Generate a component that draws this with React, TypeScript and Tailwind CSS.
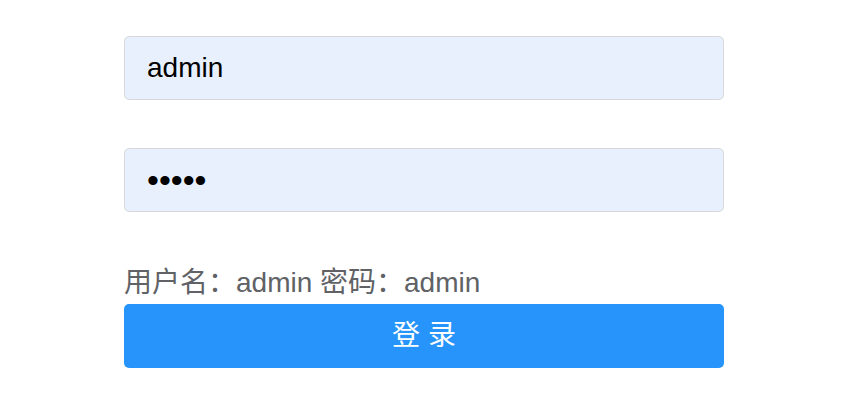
const inputCls =
  "block w-full h-16 px-[22px] rounded-[5px] border border-[#d6d8dd] bg-[#e8f0fe] text-black outline-none";

const App = () => {
  return (
    <div className="min-h-[412px] w-[866px] bg-white font-['Liberation_Sans','Noto_Sans_CJK_SC',sans-serif]">
      <div className="ml-[124px] w-[600px] pt-9">
        <input className={`${inputCls} text-[28px]`} type="text" value="admin" readOnly />
        <input className={`${inputCls} mt-12 text-[34px]`} type="password" value="admin" readOnly />
        <div className="mt-[50px] text-[28px] leading-[42px] text-[#606266]">用户名：admin 密码：admin</div>
        <button className="block w-full h-16 rounded-[5px] bg-[#2694fb] text-[28px] text-white">
          登 录
        </button>
      </div>
    </div>
  );
};

export default App;
